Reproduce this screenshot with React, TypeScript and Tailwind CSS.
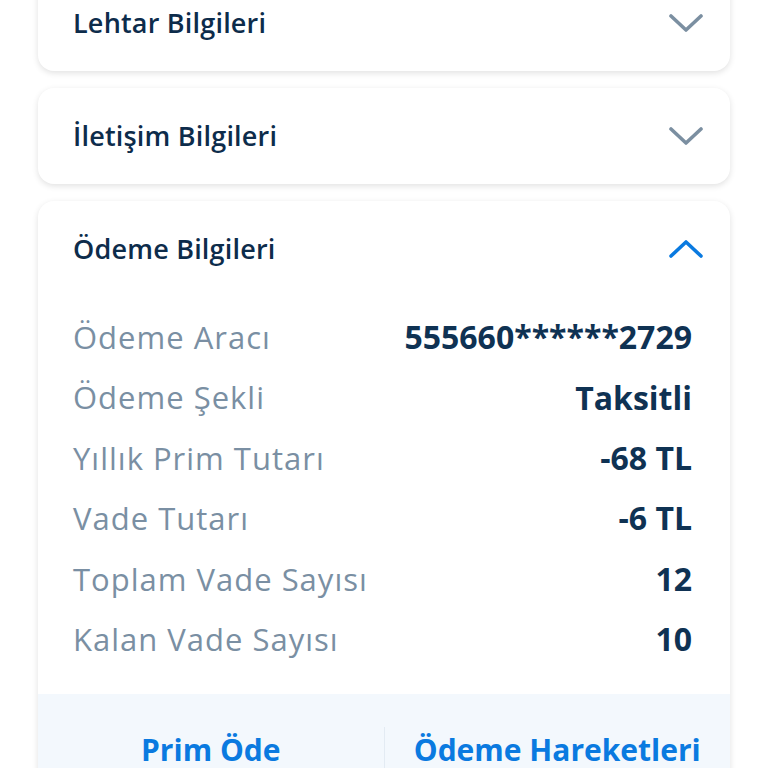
import React from "react"

const font = { fontFamily: '"Open Sans", "Noto Sans", sans-serif' }

function Chevron({ up }: { up?: boolean }) {
  return (
    <svg width="34" height="20" viewBox="0 0 34 20" fill="none">
      <polyline
        points={up ? "2,17 17,3 32,17" : "2,3 17,17 32,3"}
        stroke={up ? "#0a7ae0" : "#7b8fa1"}
        strokeWidth="3.6"
        strokeLinecap="round"
        strokeLinejoin="round"
      />
    </svg>
  )
}

function CollapsedCard({ title }: { title: string }) {
  return (
    <div className="bg-white rounded-2xl shadow-[0_2px_6px_rgba(0,0,0,0.12)] h-[96px] flex items-center justify-between pl-[35px] pr-[27px]">
      <span className="text-[27px] font-semibold tracking-[0.2px] text-[#0d2c4b]">{title}</span>
      <Chevron />
    </div>
  )
}

const rows = [
  ["Ödeme Aracı", "555660******2729"],
  ["Ödeme Şekli", "Taksitli"],
  ["Yıllık Prim Tutarı", "-68 TL"],
  ["Vade Tutarı", "-6 TL"],
  ["Toplam Vade Sayısı", "12"],
  ["Kalan Vade Sayısı", "10"],
]

export default function App() {
  return (
    <div className="w-[768px] h-[768px] overflow-hidden bg-white" style={font}>
      <div className="px-[38px] -mt-[25px] flex flex-col gap-[17px]">
        <CollapsedCard title="Lehtar Bilgileri" />
        <CollapsedCard title="İletişim Bilgileri" />

        <div className="bg-white rounded-t-2xl shadow-[0_2px_6px_rgba(0,0,0,0.12)] overflow-hidden">
          <div className="h-[96px] flex items-center justify-between pl-[35px] pr-[27px]">
            <span className="text-[27px] font-semibold tracking-[0.2px] text-[#0d2c4b]">Ödeme Bilgileri</span>
            <Chevron up />
          </div>
          <div className="pt-[10px] pb-[25px] pl-[35px] pr-[38px]">
            {rows.map(([label, value]) => (
              <div key={label} className="h-[60.4px] flex items-center justify-between">
                <span className="text-[31px] tracking-[1px] text-[#7a8fa3]">{label}</span>
                <span className="text-[32px] font-bold text-[#0f3253]">{value}</span>
              </div>
            ))}
          </div>
          <div className="h-[110px] bg-[#f3f8fd] flex">
            <div className="flex-1 flex items-center justify-center">
              <span className="text-[30px] font-bold text-[#0a7ae0]">Prim Öde</span>
            </div>
            <div className="w-px mt-[33px] bg-[#e3ebf3]" />
            <div className="flex-1 flex items-center justify-center">
              <span className="text-[30px] font-bold text-[#0a7ae0]">Ödeme Hareketleri</span>
            </div>
          </div>
        </div>
      </div>
    </div>
  )
}
